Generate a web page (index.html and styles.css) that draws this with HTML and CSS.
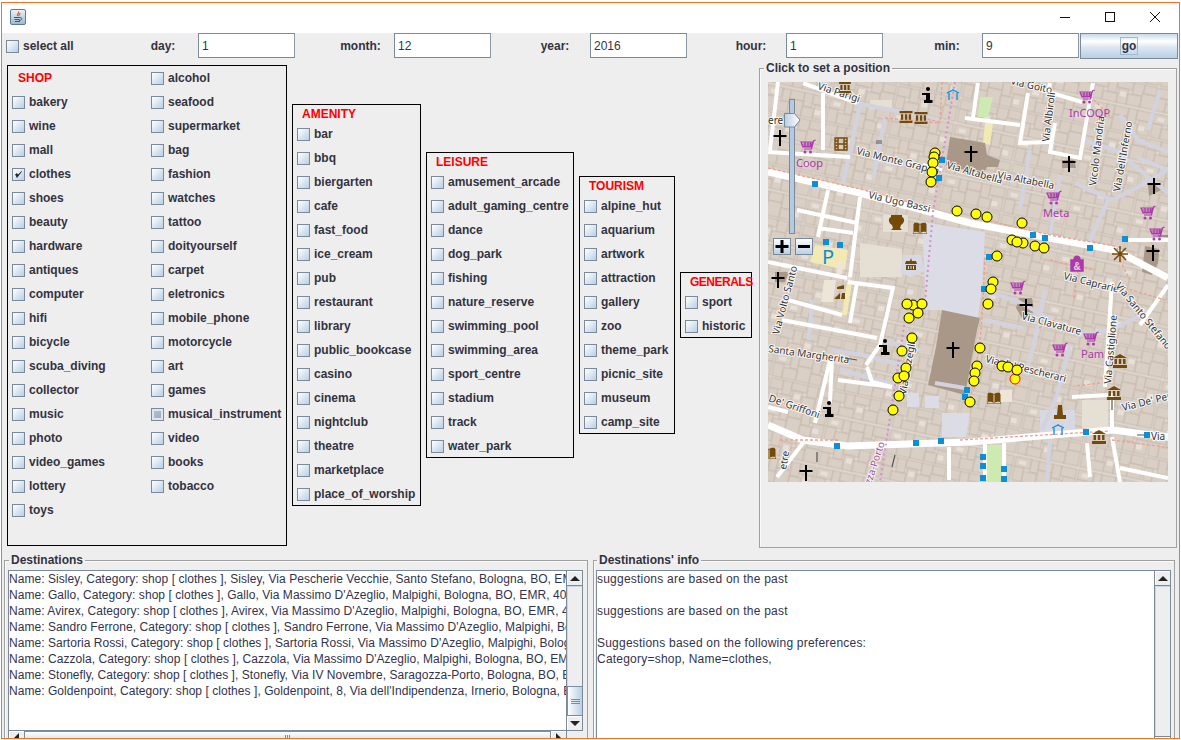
FILE: index.html
```html
<!DOCTYPE html>
<html lang="en">
<head>
<meta charset="utf-8">
<title>Destinations</title>
<link rel="stylesheet" href="styles.css">
</head>
<body>
<div class="frame">
  <header class="titlebar">
    <svg class="java" viewBox="0 0 16 16" width="16" height="16">
      <defs><linearGradient id="jv" x1="0" y1="0" x2="0" y2="1"><stop offset="0" stop-color="#eef3f8"/><stop offset="1" stop-color="#9db6cf"/></linearGradient></defs>
      <rect x=".5" y=".5" width="15" height="15" rx="1.5" fill="url(#jv)" stroke="#5f7a94"/>
      <path d="M8.5 2.5c1 1.5-2 2.500-1 4.500M10 4c0 1.500-1.500 1.500-1 3" fill="none" stroke="#d9531e" stroke-width="1.100"/>
      <path d="M4 8.500h6M4.500 10.500h5M5 12.500h5M10 8.500c3 0 2 3-1 3" fill="none" stroke="#2a5f96" stroke-width="1"/>
    </svg>
    <div class="winbtns">
      <span class="winbtn"><svg viewBox="0 0 10 10" width="10" height="10"><path d="M0 5.500h10" stroke="#111" fill="none"/></svg></span>
      <span class="winbtn"><svg viewBox="0 0 10 10" width="10" height="10"><rect x=".5" y=".5" width="9" height="9" stroke="#111" fill="none"/></svg></span>
      <span class="winbtn"><svg viewBox="0 0 10 10" width="10" height="10"><path d="M0 0l10 10M10 0L0 10" stroke="#111" fill="none"/></svg></span>
    </div>
  </header>

  <div class="toolbar">
    <label class="opt opt-all"><span class="box"></span>select all</label>
    <span class="tlabel">day:</span><input class="field" value="1">
    <span class="tlabel tlabel-month">month:</span><input class="field" value="12">
    <span class="tlabel">year:</span><input class="field" value="2016">
    <span class="tlabel">hour:</span><input class="field" value="1">
    <span class="tlabel">min:</span><input class="field" value="9">
    <button class="go"><span class="go-focus">go</span></button>
  </div>

  <div class="middle">
    <div class="cats">
      <section class="cat cat-shop">
        <div class="shop-col">
          <h2 class="cat-title cat-title-shop">SHOP</h2>
          <label class="opt"><span class="box"></span>bakery</label>
          <label class="opt"><span class="box"></span>wine</label>
          <label class="opt"><span class="box"></span>mall</label>
          <label class="opt"><span class="box box-on"><svg viewBox="0 0 13 13" width="13" height="13"><path d="M3.500 6.500l1.500 3 4.500-6-3.500 3.500-1-1.500z" fill="#222" stroke="#222" stroke-width=".7"/></svg></span>clothes</label>
          <label class="opt"><span class="box"></span>shoes</label>
          <label class="opt"><span class="box"></span>beauty</label>
          <label class="opt"><span class="box"></span>hardware</label>
          <label class="opt"><span class="box"></span>antiques</label>
          <label class="opt"><span class="box"></span>computer</label>
          <label class="opt"><span class="box"></span>hifi</label>
          <label class="opt"><span class="box"></span>bicycle</label>
          <label class="opt"><span class="box"></span>scuba_diving</label>
          <label class="opt"><span class="box"></span>collector</label>
          <label class="opt"><span class="box"></span>music</label>
          <label class="opt"><span class="box"></span>photo</label>
          <label class="opt"><span class="box"></span>video_games</label>
          <label class="opt"><span class="box"></span>lottery</label>
          <label class="opt"><span class="box"></span>toys</label>
        </div>
        <div class="shop-col">
          <label class="opt"><span class="box"></span>alcohol</label>
          <label class="opt"><span class="box"></span>seafood</label>
          <label class="opt"><span class="box"></span>supermarket</label>
          <label class="opt"><span class="box"></span>bag</label>
          <label class="opt"><span class="box"></span>fashion</label>
          <label class="opt"><span class="box"></span>watches</label>
          <label class="opt"><span class="box"></span>tattoo</label>
          <label class="opt"><span class="box"></span>doityourself</label>
          <label class="opt"><span class="box"></span>carpet</label>
          <label class="opt"><span class="box"></span>eletronics</label>
          <label class="opt"><span class="box"></span>mobile_phone</label>
          <label class="opt"><span class="box"></span>motorcycle</label>
          <label class="opt"><span class="box"></span>art</label>
          <label class="opt"><span class="box"></span>games</label>
          <label class="opt"><span class="box box-hover"></span>musical_instrument</label>
          <label class="opt"><span class="box"></span>video</label>
          <label class="opt"><span class="box"></span>books</label>
          <label class="opt"><span class="box"></span>tobacco</label>
        </div>
      </section>

      <section class="cat cat-amenity">
        <h2 class="cat-title">AMENITY</h2>
        <label class="opt"><span class="box"></span>bar</label>
        <label class="opt"><span class="box"></span>bbq</label>
        <label class="opt"><span class="box"></span>biergarten</label>
        <label class="opt"><span class="box"></span>cafe</label>
        <label class="opt"><span class="box"></span>fast_food</label>
        <label class="opt"><span class="box"></span>ice_cream</label>
        <label class="opt"><span class="box"></span>pub</label>
        <label class="opt"><span class="box"></span>restaurant</label>
        <label class="opt"><span class="box"></span>library</label>
        <label class="opt"><span class="box"></span>public_bookcase</label>
        <label class="opt"><span class="box"></span>casino</label>
        <label class="opt"><span class="box"></span>cinema</label>
        <label class="opt"><span class="box"></span>nightclub</label>
        <label class="opt"><span class="box"></span>theatre</label>
        <label class="opt"><span class="box"></span>marketplace</label>
        <label class="opt"><span class="box"></span>place_of_worship</label>
      </section>

      <section class="cat cat-leisure">
        <h2 class="cat-title">LEISURE</h2>
        <label class="opt"><span class="box"></span>amusement_arcade</label>
        <label class="opt"><span class="box"></span>adult_gaming_centre</label>
        <label class="opt"><span class="box"></span>dance</label>
        <label class="opt"><span class="box"></span>dog_park</label>
        <label class="opt"><span class="box"></span>fishing</label>
        <label class="opt"><span class="box"></span>nature_reserve</label>
        <label class="opt"><span class="box"></span>swimming_pool</label>
        <label class="opt"><span class="box"></span>swimming_area</label>
        <label class="opt"><span class="box"></span>sport_centre</label>
        <label class="opt"><span class="box"></span>stadium</label>
        <label class="opt"><span class="box"></span>track</label>
        <label class="opt"><span class="box"></span>water_park</label>
      </section>

      <section class="cat cat-tourism">
        <h2 class="cat-title">TOURISM</h2>
        <label class="opt"><span class="box"></span>alpine_hut</label>
        <label class="opt"><span class="box"></span>aquarium</label>
        <label class="opt"><span class="box"></span>artwork</label>
        <label class="opt"><span class="box"></span>attraction</label>
        <label class="opt"><span class="box"></span>gallery</label>
        <label class="opt"><span class="box"></span>zoo</label>
        <label class="opt"><span class="box"></span>theme_park</label>
        <label class="opt"><span class="box"></span>picnic_site</label>
        <label class="opt"><span class="box"></span>museum</label>
        <label class="opt"><span class="box"></span>camp_site</label>
      </section>

      <section class="cat cat-generals">
        <h2 class="cat-title">GENERALS</h2>
        <label class="opt"><span class="box"></span>sport</label>
        <label class="opt"><span class="box"></span>historic</label>
      </section>
    </div>

    <fieldset class="group group-map">
      <legend class="legend">Click to set a position</legend>
      <svg class="map" viewBox="768 82 400 400" width="400" height="400">
        <defs>
          <pattern id="blocks" width="64" height="52" patternUnits="userSpaceOnUse" patternTransform="rotate(12)">
            <rect width="64" height="52" fill="#e0d9d1"/>
            <g class="blk">
              <rect x="1" y="1" width="13" height="10"/><rect x="14" y="1" width="9" height="14"/><rect x="23" y="1" width="16" height="8"/><rect x="39" y="1" width="11" height="12"/><rect x="50" y="1" width="13" height="9"/>
              <rect x="1" y="11" width="9" height="13"/><rect x="10" y="15" width="15" height="9"/><rect x="25" y="9" width="10" height="15"/><rect x="35" y="13" width="14" height="11"/><rect x="49" y="10" width="14" height="14"/>
              <rect x="1" y="27" width="16" height="10"/><rect x="17" y="27" width="8" height="13"/><rect x="25" y="27" width="14" height="9"/><rect x="39" y="27" width="9" height="14"/><rect x="48" y="27" width="15" height="10"/>
              <rect x="1" y="37" width="10" height="14"/><rect x="11" y="40" width="14" height="11"/><rect x="25" y="36" width="14" height="15"/><rect x="39" y="41" width="12" height="10"/><rect x="51" y="37" width="12" height="14"/>
            </g>
            <rect x="27" y="12" width="6" height="5" fill="#e6e0d8"/><rect x="5" y="30" width="7" height="4" fill="#e6e0d8"/><rect x="52" y="42" width="6" height="5" fill="#e6e0d8"/>
          </pattern>
          <symbol id="cart" viewBox="0 0 16 16"><path d="M15.500 1l-2 1-2 8H4M1 3h11.500l-1.200 5H3zM2.500 5h9.500M3 7h8.500M5 3v5M8 3v5M10.500 3v5" fill="none" stroke="#ac39ac" stroke-width="1.200"/><circle cx="5" cy="13" r="1.500" fill="#ac39ac"/><circle cx="10.500" cy="13" r="1.500" fill="#ac39ac"/></symbol>
          <symbol id="cross" viewBox="0 0 14 16"><path d="M6 0h2v5h5.500v2H8v9H6V7H.5V5H6z" fill="#000"/></symbol>
          <symbol id="museum" viewBox="0 0 14 13"><path d="M0 0h14v2.500H0zM1.500 3.500h2.500v6H1.500zM5.800 3.500h2.500v6H5.800zM10 3.500h2.500v6H10zM0 10.500h14V13H0z" fill="#734a08"/></symbol>
          <symbol id="museum2" viewBox="0 0 14 14"><path d="M7 0l7 4H0zM1.500 5h2.500v5H1.500zM5.800 5h2.500v5H5.800zM10 5h2.500v5H10zM0 11h14v3H0z" fill="#734a08"/></symbol>
          <symbol id="info" viewBox="0 0 12 16"><circle cx="7" cy="2" r="2" fill="#000"/><path d="M1 6h8v7h2.500v3H3v-3h2V8H1z" fill="#000"/></symbol>
          <symbol id="film" viewBox="0 0 14 14"><path d="M1 1h12v12H1zM4 1v12M10 1v12M4 7h6M1 4h3M1 7h3M1 10h3M10 4h3M10 7h3M10 10h3" fill="none" stroke="#734a08" stroke-width="1.400"/></symbol>
          <symbol id="book" viewBox="0 0 14 12"><path d="M7 2C5 .5 2.500.5 1 1v9c1.500-.5 4-.5 6 1 2-1.500 4.500-1.500 6-1V1c-1.500-.5-4-.5-6 1z" fill="#734a08"/><path d="M0 2v10h14V2" fill="none" stroke="#734a08"/><path d="M7 2.500V10.500" stroke="#ddd5cc"/></symbol>
          <symbol id="fountain" viewBox="0 0 14 14"><path d="M1 7l6-3 6 3M3 7v7M11 7v7M7 4v-1" fill="none" stroke="#0a8fd8" stroke-width="1.300"/><path d="M3 2h.5M6 1h.5M9 1h.5M11 3h.5M4 4h.5M10 4.500h.5" stroke="#7fc4e8" stroke-width="1"/></symbol>
          <symbol id="hall" viewBox="0 0 12 12"><path d="M6 0l1 3h4l1 3H0l1-3h4zM1 7h10v5H1z" fill="#734a08"/><path d="M3.500 8v3M6 8v3M8.500 8v3" stroke="#d8d8e2"/></symbol>
          <linearGradient id="btn" x1="0" y1="0" x2="0" y2="1"><stop offset="0" stop-color="#fff"/><stop offset="1" stop-color="#b8cfe5"/></linearGradient>
          <linearGradient id="thumb" x1="0" y1="0" x2="1" y2="0"><stop offset="0" stop-color="#b8cfe5"/><stop offset="1" stop-color="#fff"/></linearGradient>
        </defs>

        <rect x="768" y="82" width="400" height="400" fill="url(#blocks)"/>

        <!-- plazas and land use -->
        <path class="lav" d="M922 222L985 232 982 285 978 320 942 310 926 310zM942 413h28l-4 24h-24zM907 393h12v14h-12zM925 396h14v12h-14z"/>
        <path class="pale" d="M815 245l33 5-3 20-35-8zM847 282h5l-5 33h-5zM985 123h8l-3 22-7-2z"/>
        <path class="green" d="M980 97h13l-5 20h-10zM986 445h17v37h-17z"/>
        <path class="cream" d="M883 215h25v17h-25zM860 243l42 6v28h-42zM870 100h22v9h-22zM1082 400h26v28h-26z"/>
        <path class="lav-fill" d="M903 255h18l4 16-14 6-11-4zM1040 410h35v25h-35z"/>
        <path class="church" d="M950 137l35 6 2 12 13 5-2 7h-11l-4 8-37-10zM942 310l38 8-3 12-12 65-37-10 8-38zM1145 246l14 3-1 14-6 12-10-3zM1019 298h13l2 14-12 6-6-10zM1062 160h12l2 8h-14zM1148 184h10l3 6-12 6zM775 272h14l-4 10h-10z"/>
        <path class="light" d="M824 280h12l-3 22h-12zM1000 390h12v12h-12zM838 262h6l-2 12h-6z"/>

        <!-- pedestrian ways -->
        <g class="ped">
          <path d="M857 103l83 17M860 105l-17 78M885 118l-12 60M875 160l60 10M1082 140l33 10 37 30 16 13M1075 183l37 17 26-13 30-17M1030 150l-10 60M1060 175l-10 60M1120 115l18 25 30 12M1108 200l-20 45M1160 90l-12 40M812 300l-3 40M832 350l30 5 40 10M880 340l40 10M840 370l55 15M935 383l30 5M984 290l35 12 60 33 32-5 40-20M985 320l38 8M1045 290l-10 50-10 35M1070 345l-13 50-15 35M1050 440l-3 42M1118 405l50-8M1138 158l30 12"/>
        </g>

        <!-- streets -->
        <g class="road">
          <path d="M803 83l54 20M768 152l82 5M778 82l-8 68M823 93v57M828 190l-10 47M860 197l-10 80M797 210l60 13M818 228l35 5M768 262l79 16M857 282l-7 41M848 282l45 6-13 57-14 20M788 300l54 15M782 320l95 18M867 367l5 15 20 5M838 380l54 7M830 360l-15 63M832 358l-2 45M803 443l-26 34M978 83l-5 34M965 118l55 7M1028 93l-8 50 30-1M1050 83l-2 10M1042 90l40 12M1093 83l-13 75-30-6 5-29M1112 282l-7 105M1072 397l36-2M1168 285l-28 40M1087 443l3 34M1112 437l8 45M1120 468l48 10M985 443v37M1004 443v37M949 447v33M1125 240h43M923 165l19 5M1112 393v37M768 407l20 5"/>
        </g>
        <g class="road road-main">
          <path d="M768 172l92 21 70 19 40 11 90 17 55 10 53 28"/>
          <path d="M768 425l35 15 44 6 123-4 82-7 60-5 56 7"/>
        </g>

        <!-- boundary and route dashes -->
        <path class="pink" d="M768 168l92 21 70 19M975 218l80 18 60 10 10 12M942 82l-2 40-20-5M885 118l55 5M1090 96l20 20M985 252l-2 50-3 40-10 60M1050 260l25 6 20 4M1120 260l10 20M1078 270l-4 30M780 440h60M960 440l100-6 50-3M1112 440l60 8M1115 285l50 15M1110 382l-36 4M1055 320l-16 8"/>
        <path class="dots" d="M955 82l-22 130-8 90M905 320l-25 162"/>

        <!-- street names -->
        <g class="name">
          <text transform="translate(817 89) rotate(18)">Via Parigi</text>
          <text transform="translate(856 154) rotate(14)">Via Monte Grappa</text>
          <text transform="translate(868 198) rotate(13)">Via Ugo Bassi</text>
          <text transform="translate(946 168) rotate(16)">Via Altabella</text>
          <text transform="translate(997 178) rotate(11)">Via Altabella</text>
          <text transform="translate(1010 84) rotate(13)">Via Goito</text>
          <text transform="translate(1049 142) rotate(-83)">Via Albiroli</text>
          <text transform="translate(1096 186) rotate(-83)">Vicolo Mandria</text>
          <text transform="translate(1120 192) rotate(-80)">Via dell'Inferno</text>
          <text transform="translate(1063 279) rotate(14)">Via Caprarie</text>
          <text transform="translate(1021 319) rotate(15)">Via Clavature</text>
          <text transform="translate(1115 286) rotate(51)">Via Santo Stefano</text>
          <text transform="translate(1111 384) rotate(-85)">Via Castiglione</text>
          <text transform="translate(1123 411) rotate(-14)">Via De' Pepoli</text>
          <text transform="translate(985 362) rotate(14)">Via de' Pescherari</text>
          <text transform="translate(1151 440)">Via I</text>
          <text transform="translate(779 335) rotate(-75)">Via Volto Santo</text>
          <text transform="translate(768 352) rotate(8)">Santa Margherita</text>
          <text transform="translate(768 401) rotate(19)">De' Griffoni</text>
          <text transform="translate(906 395) rotate(-80)">Via D'Azeglio</text>
          <text class="name-route" transform="translate(861 516) rotate(-72)">Saragozza-Porto</text>
          <text transform="translate(1158 70) rotate(30)">Via</text>
          <text transform="translate(768 124)">ere</text>
          <text transform="translate(786 470) rotate(-80)">etre</text>
        </g>
        <text class="brand" x="796" y="167">Coop</text>
        <text class="brand" x="1069" y="117">InCOOP</text>
        <text class="brand" x="1043" y="217">Meta</text>
        <text class="brand" x="1081" y="358">Pam</text>

        <!-- arrows -->
        <g class="arrow">
          <path d="M876 141h6M876 143h6"/>
          <path d="M845 358l12 2M1145 435h-8M1112 400v10M1170 236h-12M895 455l-3 12M817 452v10"/>
        </g>

        <!-- POI icons -->
        <use href="#cart" x="800" y="139" width="16" height="16"/><use href="#cart" x="1079" y="89" width="16" height="16"/>
        <use href="#cart" x="1046" y="190" width="16" height="16"/><use href="#cart" x="1140" y="205" width="16" height="16"/>
        <use href="#cart" x="1149" y="226" width="16" height="16"/><use href="#cart" x="1010" y="280" width="16" height="16"/>
        <use href="#cart" x="1052" y="342" width="16" height="16"/><use href="#cart" x="1083" y="331" width="16" height="16"/>

        <use href="#cross" x="773" y="130" width="14" height="16"/><use href="#cross" x="964" y="146" width="14" height="16"/>
        <use href="#cross" x="1062" y="156" width="14" height="16"/><use href="#cross" x="1147" y="178" width="14" height="16"/>
        <use href="#cross" x="1146" y="245" width="14" height="16"/><use href="#cross" x="1019" y="299" width="14" height="16"/>
        <use href="#cross" x="946" y="342" width="14" height="16"/><use href="#cross" x="799" y="465" width="14" height="16"/>
        <use href="#cross" x="771" y="272" width="14" height="16"/>

        <use href="#museum" x="838" y="82" width="14" height="11"/><use href="#museum" x="899" y="111" width="14" height="12"/>
        <use href="#museum" x="914" y="112" width="14" height="12"/>
        <use href="#museum2" x="1113" y="354" width="14" height="14"/><use href="#museum2" x="1107" y="386" width="14" height="14"/>
        <use href="#museum2" x="1092" y="430" width="14" height="14"/>

        <use href="#info" x="921" y="87" width="12" height="16"/><use href="#info" x="878" y="339" width="12" height="16"/>
        <use href="#info" x="822" y="401" width="12" height="16"/>
        <use href="#film" x="834" y="137" width="14" height="14"/>
        <use href="#book" x="913" y="222" width="14" height="12"/><use href="#book" x="987" y="392" width="14" height="12"/>
        <use href="#book" x="762" y="447" width="14" height="12"/>
        <use href="#fountain" x="946" y="86" width="14" height="14"/><use href="#fountain" x="1051" y="421" width="14" height="14"/>
        <use href="#hall" x="905" y="258" width="12" height="12"/>

        <path class="brown" d="M891 215h11v2c3 1 3 6-1 8l-1 3 2 2h-11l2-2-1-3c-4-2-4-7-1-8zM1058 405h4l1 10h3v4h-12v-4h3zM837 287l7-2v4h-7zM834 299l6-6v6zM842 293h3v6h-4z"/>
        <path class="shopgift" d="M1071 260h12v11h-12zM1074 260c0-5 6-5 6 0"/>
        <text class="gift-mark" x="1077" y="270">&amp;</text>
        <path class="star" d="M1112 254h16M1120 246v16M1114 248l12 12M1126 248l-12 12"/>
        <text class="parking" x="828" y="264">P</text>

        <!-- stops -->
        <g class="stop">
          <rect x="812" y="181" width="6" height="6"/><rect x="823" y="239" width="6" height="6"/><rect x="837" y="242" width="6" height="6"/>
          <rect x="939" y="157" width="6" height="6"/><rect x="936" y="175" width="6" height="6"/><rect x="1030" y="232" width="6" height="6"/>
          <rect x="1042" y="235" width="6" height="6"/><rect x="1087" y="245" width="6" height="6"/><rect x="1122" y="236" width="6" height="6"/>
          <rect x="986" y="254" width="6" height="6"/><rect x="981" y="286" width="6" height="6"/><rect x="1083" y="429" width="6" height="6"/>
          <rect x="1144" y="432" width="6" height="6"/><rect x="964" y="387" width="6" height="6"/><rect x="962" y="394" width="6" height="6"/>
          <rect x="980" y="454" width="6" height="6"/><rect x="980" y="463" width="6" height="6"/><rect x="980" y="475" width="6" height="6"/>
          <rect x="1001" y="466" width="6" height="6"/><rect x="1001" y="476" width="6" height="6"/><rect x="834" y="443" width="6" height="6"/>
          <rect x="913" y="440" width="6" height="6"/><rect x="938" y="438" width="6" height="6"/>
        </g>

        <!-- destinations -->
        <g class="dest">
          <circle cx="935" cy="153" r="5"/><circle cx="934" cy="157" r="5"/><circle cx="933" cy="163" r="5"/><circle cx="932" cy="172" r="5"/><circle cx="931" cy="182" r="5"/>
          <circle cx="957" cy="211" r="5"/><circle cx="976" cy="214" r="5"/><circle cx="987" cy="217" r="5"/><circle cx="1022" cy="223" r="5"/>
          <circle cx="1012" cy="240" r="5"/><circle cx="1023" cy="243" r="5"/><circle cx="1017" cy="242" r="5"/><circle cx="1035" cy="246" r="5"/><circle cx="1044" cy="248" r="5"/>
          <circle cx="997" cy="256" r="5"/><circle cx="993" cy="282" r="5"/><circle cx="991" cy="289" r="5"/><circle cx="988" cy="304" r="5"/>
          <circle cx="980" cy="348" r="5"/><circle cx="977" cy="366" r="5"/><circle cx="975" cy="373" r="5"/><circle cx="974" cy="381" r="5"/><circle cx="970" cy="402" r="5"/>
          <circle class="dest-sel" cx="1015" cy="379" r="5"/><circle cx="1002" cy="366" r="5"/><circle cx="1008" cy="367" r="5"/><circle cx="1017" cy="370" r="5"/>
          <circle cx="913" cy="305" r="5"/><circle cx="907" cy="304" r="5"/><circle cx="922" cy="304" r="5"/><circle cx="918" cy="313" r="5"/><circle cx="909" cy="318" r="5"/>
          <circle cx="912" cy="338" r="5"/><circle cx="902" cy="351" r="5"/><circle cx="906" cy="368" r="5"/><circle cx="898" cy="378" r="5"/><circle cx="904" cy="376" r="5"/>
          <circle cx="899" cy="396" r="5"/><circle cx="893" cy="410" r="5"/>
        </g>

        <!-- zoom control -->
        <rect class="ctl ctl-track" x="789.500" y="99.500" width="5" height="134"/>
        <path class="ctl" d="M784.500 113.500h10l5.500 6.500-5.500 7h-10z" fill="url(#thumb)"/>
        <rect class="ctl" x="773.500" y="238.500" width="17" height="16" fill="url(#btn)"/>
        <rect class="ctl" x="795.500" y="238.500" width="17" height="16" fill="url(#btn)"/>
        <path class="ctl-glyph" d="M775.500 245h5v-5h3v5h5v3h-5v5h-3v-5h-5zM798 245h12v3h-12z"/>
      </svg>
    </fieldset>
  </div>

  <div class="bottom">
    <fieldset class="group group-dest">
      <legend class="legend">Destinations</legend>
      <div class="scrollpane scrollpane-dest">
        <div class="list">
          <p class="line">Name: Sisley, Category: shop [ clothes ], Sisley, Via Pescherie Vecchie, Santo Stefano, Bologna, BO, EMR, 40124</p>
          <p class="line">Name: Gallo, Category: shop [ clothes ], Gallo, Via Massimo D'Azeglio, Malpighi, Bologna, BO, EMR, 40123</p>
          <p class="line">Name: Avirex, Category: shop [ clothes ], Avirex, Via Massimo D'Azeglio, Malpighi, Bologna, BO, EMR, 40123</p>
          <p class="line">Name: Sandro Ferrone, Category: shop [ clothes ], Sandro Ferrone, Via Massimo D'Azeglio, Malpighi, Bologna, BO</p>
          <p class="line">Name: Sartoria Rossi, Category: shop [ clothes ], Sartoria Rossi, Via Massimo D'Azeglio, Malpighi, Bologna, BO</p>
          <p class="line">Name: Cazzola, Category: shop [ clothes ], Cazzola, Via Massimo D'Azeglio, Malpighi, Bologna, BO, EMR, 40123</p>
          <p class="line">Name: Stonefly, Category: shop [ clothes ], Stonefly, Via IV Novembre, Saragozza-Porto, Bologna, BO, EMR, 40123</p>
          <p class="line">Name: Goldenpoint, Category: shop [ clothes ], Goldenpoint, 8, Via dell'Indipendenza, Irnerio, Bologna, BO, EMR</p>
        </div>
        <div class="vbar">
          <span class="sbtn"><i class="tri tri-up"></i></span>
          <span class="vtrack"><span class="vthumb"><i class="grip"></i></span></span>
          <span class="sbtn sbtn-end"><i class="tri tri-down"></i></span>
        </div>
        <div class="hbar">
          <span class="hbtn"><i class="tri tri-left"></i></span>
          <span class="hthumb"><i class="hgrip"></i></span>
          <span class="hbtn"><i class="tri tri-right"></i></span>
        </div>
      </div>
    </fieldset>
    <fieldset class="group group-info">
      <legend class="legend">Destinations' info</legend>
      <div class="scrollpane scrollpane-info">
        <div class="list list-info">
          <p class="line">suggestions are based on the past</p>
          <p class="line line-blank"></p>
          <p class="line">suggestions are based on the past</p>
          <p class="line line-blank"></p>
          <p class="line">Suggestions based on the following preferences:</p>
          <p class="line">Category=shop, Name=clothes,</p>
        </div>
        <div class="vbar vbar-info">
          <span class="sbtn"><i class="tri tri-up"></i></span>
          <span class="vtrack vtrack-empty"></span>
          <span class="sbtn"><i class="tri tri-down"></i></span>
        </div>
      </div>
    </fieldset>
  </div>
</div>
</body>
</html>
```
FILE: styles.css
```css
* { box-sizing: border-box; }
html, body { margin: 0; padding: 0; background: #fff; }
body { width: 1181px; height: 740px; overflow: hidden; font: 12px/16px "Liberation Sans", Arial, sans-serif; color: #33333f; }

.frame { margin: 2px 0 0 1px; width: 1179px; height: 737px; border: 1px solid #f0752a; background: #eeeeee; overflow: hidden; display: flex; flex-direction: column; }

.titlebar { height: 30px; flex: none; background: #fff; display: flex; align-items: center; padding: 0 2px 0 8px; }
.java { display: block; margin-top: -2px; }
.winbtns { margin-left: auto; display: flex; }
.winbtn { width: 45px; height: 30px; display: flex; align-items: center; justify-content: center; }
.winbtn svg { display: block; margin-top: -2px; }

.toolbar { height: 27px; flex: none; display: grid; grid-template-columns: repeat(12, 98px); align-items: start; }
.tlabel { font-weight: bold; text-align: center; padding-left: 28px; line-height: 26px; }
.tlabel-month { padding-left: 31px; }
.field { width: 97px; height: 25px; margin: 0; padding: 1px 0 0 3px; border: 1px solid #7a8a99; border-right-color: #8a98a6; background: #fff; font: 12px "Liberation Sans", Arial, sans-serif; color: #33333f; outline: none; }
.go { width: 98px; height: 26px; margin: 0; padding: 0; border: 1px solid #7a8a99; background: linear-gradient(#c9d9ea, #fff 30%, #dce7f2 55%, #b8cfe5); display: flex; align-items: center; justify-content: center; font: bold 12px "Liberation Sans", Arial, sans-serif; color: #33333f; }
.go-focus { border: 1px solid #a3b8cc; padding: 0 1px; height: 18px; line-height: 17px; }

.opt { display: flex; align-items: center; gap: 4px; height: 24px; padding-top: 2px; font-weight: bold; white-space: nowrap; }
.opt-all { padding: 0 0 0 4px; height: 26px; gap: 4px; }
.box { width: 13px; height: 13px; flex: none; display: block; border: 1px solid #7a8a99; background: linear-gradient(135deg, #fff, #b8cfe5); position: relative; }
.box svg { display: block; margin: -1px; }
.box-hover { background: linear-gradient(135deg, #b8c4d2, #98a8ba); box-shadow: inset 0 0 0 2px #dde6ef; }

.middle { height: 492px; flex: none; display: flex; align-items: flex-start; }
.cats { width: 745px; height: 482px; margin: 4px 0 0 5px; display: flex; align-items: center; gap: 5px; flex: none; }
.cat { border: 1px solid #000; padding-left: 4px; flex: none; }
.cat-title { margin: 0; font: bold 12px/18px "Liberation Sans", Arial, sans-serif; color: #f00; padding-left: 5px; height: 16px; white-space: nowrap; }
.cat-shop { width: 280px; height: 481px; align-self: flex-start; margin-top: 1px; display: grid; grid-template-columns: 139px 1fr; padding-left: 0; }
.shop-col { padding-left: 4px; margin-top: -1px; }
.cat-title-shop { height: 24px; line-height: 26px; padding-left: 6px; }
.cat-amenity { width: 129px; }
.cat-leisure { width: 148px; }
.cat-tourism { width: 96px; }
.cat-generals { width: 72px; }
.cat-generals .cat-title { letter-spacing: -.5px; }

.group { margin: 0; padding: 0; border: 1px solid #a0a0a0; box-shadow: inset 1px 1px 0 #fafafa; min-width: 0; }
.legend { font-weight: bold; padding: 0 2px; height: 16px; line-height: 16px; color: #33333f; }
.group-map { width: 418px; height: 488px; margin-left: 7px; padding: 6px 0 0 8px; flex: none; }
.group-map .legend { margin-left: -4px; }
.map { display: block; }

.blk rect { fill: #d9cfc5; stroke: #c2b4a7; stroke-width: .7; }
.lav { fill: #dcdce6; }
.lav-fill { fill: #d8d8e2; }
.pale { fill: #f3e9b5; }
.green { fill: #cdebb0; }
.cream { fill: #e6dfd3; }
.church { fill: #a99888; }
.light { fill: #ece5d8; }
.ped path { fill: none; stroke: #d3d3e0; stroke-width: 4; }
.road path { fill: none; stroke: #fff; stroke-width: 4; }
.road-main path { stroke-width: 7; }
.pink { fill: none; stroke: #ef9f90; stroke-width: 1.300; stroke-dasharray: 3 2; }
.dots { fill: none; stroke: #d58fd0; stroke-width: 2; stroke-dasharray: 2 3; }
.name text { font: 10px "Noto Sans", "DejaVu Sans", sans-serif; fill: #333; stroke: #fff; stroke-width: 2px; stroke-opacity: .85; paint-order: stroke; }
.name .name-route { fill: #9a4f9a; }
.brand { font: 11px "Noto Sans", "DejaVu Sans", sans-serif; fill: #ac39ac; }
.arrow path { fill: none; stroke: #555; stroke-width: 1.200; }
.brown { fill: #734a08; }
.shopgift { fill: #ac39ac; stroke: #ac39ac; stroke-width: 1.500; }
.gift-mark { font: bold 10px "Liberation Sans", sans-serif; fill: #e8d0e8; text-anchor: middle; }
.star { fill: none; stroke: #734a08; stroke-width: 1.500; }
.parking { font: 20px "Noto Sans", "DejaVu Sans", sans-serif; fill: #0a8fd8; text-anchor: middle; }
.stop rect { fill: #0a8fd8; }
.dest circle { fill: #ff0; stroke: #000; stroke-width: 1; }
.dest .dest-sel { stroke: #f00; }
.ctl { stroke: #7a8a99; stroke-width: 1; }
.ctl-track { fill: #b5cae2; }
.ctl-glyph { fill: #000; }

.bottom { flex: 1; min-height: 0; display: flex; padding-left: 2px; gap: 5px; }
.group-dest { width: 584px; height: 190px; flex: none; padding: 2px 0 0 3px; }
.group-dest .legend { margin-left: 1px; }
.group-info { width: 582px; height: 190px; flex: none; padding: 2px 0 0 2px; }
.group-info .legend { margin-left: 1px; }

.scrollpane { position: relative; display: grid; grid-template-columns: 1fr 16px; }
.scrollpane-dest { width: 575px; height: 176px; grid-template-rows: 161px 15px; }
.scrollpane-info { width: 575px; height: 176px; }
.list { background: #fff; border: 1px solid #7a8a99; overflow: hidden; white-space: nowrap; min-width: 0; letter-spacing: .05px; }
.list-info { letter-spacing: .22px; }
.line { margin: 0; height: 16px; line-height: 16px; color: #33334a; }

.vbar { display: flex; flex-direction: column; border: 1px solid #7a8a99; border-left: 0; background: #eee; }
.vbar-info { height: 176px; }
.sbtn { flex: none; height: 15px; display: flex; align-items: center; justify-content: center; border-bottom: 1px solid #7a8a99; background: #eee; box-shadow: inset 1px 1px 0 #fff; }
.sbtn-end { border-bottom: 0; border-top: 1px solid #7a8a99; }
.vbar-info .sbtn:last-child { border-bottom: 0; border-top: 1px solid #7a8a99; height: 9px; overflow: hidden; }
.vtrack { flex: 1; display: flex; flex-direction: column; justify-content: flex-end; box-shadow: inset 1px 1px 0 #c8d8e8; }
.vthumb { height: 29px; display: flex; align-items: center; justify-content: center; border: 1px solid #7a8fa8; border-right: 0; border-bottom: 0; background: linear-gradient(90deg, #fff, #b8cfe5); }
.grip { display: block; width: 9px; height: 5px; border-top: 1px solid #6f8fb5; border-bottom: 1px solid #6f8fb5; background: linear-gradient(#6f8fb5, #6f8fb5) center / 100% 1px no-repeat; }

.tri { display: block; width: 0; height: 0; border-style: solid; border-color: transparent; }
.tri-up { border-width: 0 5px 5px; border-bottom-color: #222; }
.tri-down { border-width: 5px 5px 0; border-top-color: #222; }
.tri-left { border-width: 5px 5px 5px 0; border-right-color: #222; }
.tri-right { border-width: 5px 0 5px 5px; border-left-color: #222; }

.hbar { display: flex; border: 1px solid #7a8a99; border-top: 0; background: #eee; min-width: 0; }
.hbtn { flex: none; width: 16px; display: flex; align-items: center; justify-content: center; border-right: 1px solid #7a8a99; box-shadow: inset 1px 1px 0 #fff; }
.hbtn:last-child { border-right: 0; border-left: 1px solid #7a8a99; }
.hthumb { flex: 1; display: flex; justify-content: center; padding-top: 3px; background: linear-gradient(#fff, #b8cfe5); border-top: 1px solid #6f8fc5; }
.hgrip { display: block; width: 5px; height: 9px; border-left: 1px solid #6f8fb5; border-right: 1px solid #6f8fb5; background: linear-gradient(#6f8fb5, #6f8fb5) center / 1px 100% no-repeat; }
```
